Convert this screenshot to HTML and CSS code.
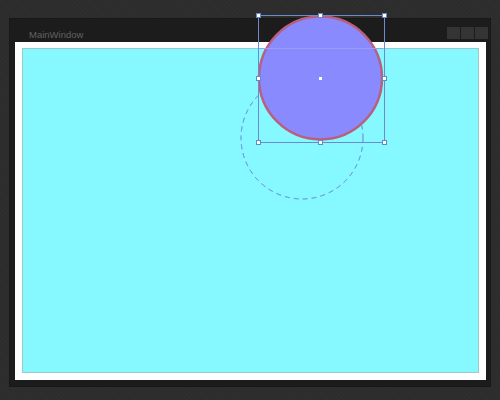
FILE: index.html
```html
<!DOCTYPE html>
<html>
<head>
<meta charset="utf-8">
<link rel="stylesheet" href="styles.css">
</head>
<body>
<div class="window">
  <div class="titlebar">
    <span class="title">MainWindow</span>
    <div class="buttons">
      <span class="btn"></span><span class="btn"></span><span class="btn"></span>
    </div>
  </div>
  <div class="client">
    <div class="canvas"></div>
  </div>
</div>
<svg class="overlay" width="500" height="400" viewBox="0 0 500 400">
  <circle cx="302" cy="138" r="61" fill="none" stroke="#6a98d6" stroke-width="1" stroke-dasharray="5 4"/>
  <circle cx="320.5" cy="78" r="61.5" fill="#8a8aff" stroke="#b9607e" stroke-width="2.5"/>
  <line x1="259" y1="48.5" x2="383" y2="48.5" stroke="#9c9cff" stroke-width="1"/>
  <circle cx="302" cy="138" r="61" fill="none" stroke="#7a9ae8" stroke-opacity="0.5" stroke-width="1" stroke-dasharray="5 4"/>
  <rect x="258.5" y="15.5" width="126" height="127" fill="none" stroke="#6a8ccc" stroke-width="1"/>
  <g fill="#ffffff" stroke="#6488c8" stroke-width="1">
    <rect x="256.5" y="13.5" width="4" height="4"/>
    <rect x="318.5" y="13.5" width="4" height="4"/>
    <rect x="382.5" y="13.5" width="4" height="4"/>
    <rect x="256.5" y="76.5" width="4" height="4"/>
    <rect x="382.5" y="76.5" width="4" height="4"/>
    <rect x="256.5" y="140.5" width="4" height="4"/>
    <rect x="318.5" y="140.5" width="4" height="4"/>
    <rect x="382.5" y="140.5" width="4" height="4"/>
  </g>
  <rect x="319" y="77" width="3" height="3" fill="#ffffff"/>
</svg>
</body>
</html>
```

FILE: styles.css
```css
html, body {
  margin: 0;
  padding: 0;
}
body {
  width: 500px;
  height: 400px;
  background-color: #2c2c2c;
  background-image: repeating-linear-gradient(45deg, rgba(255,255,255,0.015) 0 1px, transparent 1px 3px);
  overflow: hidden;
  position: relative;
  padding-top: 18px;
  box-sizing: border-box;
}
.window {
  margin-left: 9px;
  width: 482px;
  height: 369px;
  box-sizing: border-box;
  background: #1c1c1c;
  border: 1px solid #181818;
  display: flex;
  flex-direction: column;
}
.titlebar {
  height: 23px;
  display: flex;
  align-items: flex-start;
  justify-content: space-between;
  padding-left: 19px;
  padding-right: 2px;
}
.title {
  font-family: "Liberation Sans", Arial, sans-serif;
  font-size: 9.5px;
  color: #626262;
  margin-top: 11px;
  line-height: 10px;
}
.buttons {
  display: flex;
  gap: 1px;
  margin-top: 8px;
}
.btn {
  display: block;
  width: 13px;
  height: 12px;
  background: #343434;
}
.client {
  margin-left: 5px;
  width: 471px;
  height: 338px;
  background: #ffffff;
  padding: 6px 7px 7px 7px;
  box-sizing: border-box;
}
.canvas {
  width: 100%;
  height: 100%;
  box-sizing: border-box;
  background: #86f8ff;
  border: 1px solid #9ccaca;
}
.overlay {
  position: absolute;
  left: 0;
  top: 0;
}
```
